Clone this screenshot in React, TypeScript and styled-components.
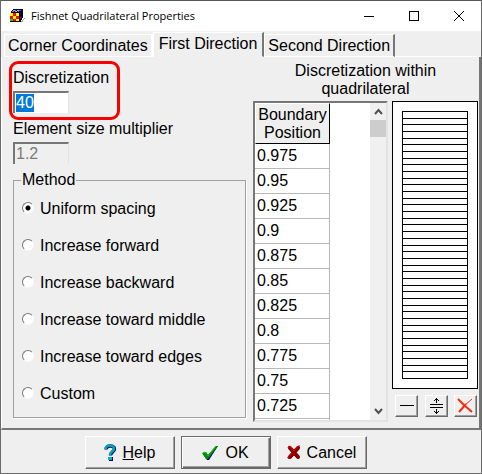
import React, { useState } from "react";
import styled, { createGlobalStyle, css } from "styled-components";

const GlobalStyle = createGlobalStyle`
  * { box-sizing: border-box; }
  body {
    margin: 0;
    background: #efefef;
    color: #000;
    font: 16px/18px "Liberation Sans", Arial, sans-serif;
  }
  button, input, select { font: inherit; color: inherit; }
`;

const Dialog = styled.main`
  display: flex;
  flex-direction: column;
  min-height: 100vh;
  border: 1px solid #6a6a6a;
  border-top-color: #5c585c;
  background: #efefef;
`;

const TitleBar = styled.header`
  display: flex;
  align-items: center;
  height: 30px;
  padding-left: 8px;
  background: #fff;
`;

const Title = styled.h1`
  flex: 1;
  margin: 0 0 0 5px;
  font: 11px/16px "Open Sans", "Noto Sans", sans-serif;
  white-space: nowrap;
`;

const WindowButton = styled.button`
  display: flex;
  align-items: center;
  justify-content: center;
  width: 45px;
  height: 30px;
  padding: 0;
  border: 0;
  background: transparent;
`;

const TabStrip = styled.div`
  display: flex;
  align-items: flex-end;
  height: 26px;
  padding: 1px 1px 0 3px;
`;

const TabFiller = styled.div`
  flex: 1;
  border-bottom: 1px solid #fff;
`;

const Tab = styled.button<{ $active: boolean }>`
  height: ${(p) => (p.$active ? 25 : 23)}px;
  padding: ${(p) => (p.$active ? "0 5px 2px" : "0 3px")};
  border: 1px solid #fff;
  border-right: 2px solid ${(p) => (p.$active ? "#777" : "#fff")};
  border-bottom-color: ${(p) => (p.$active ? "#efefef" : "#fff")};
  background: #efefef;
  line-height: 18px;
  white-space: nowrap;

  &:last-of-type { border-right-color: #777; }
`;

const Page = styled.section`
  display: flex;
  flex: 1;
  gap: 7px;
  padding: 4px 1px 5px 7px;
  border-left: 1px solid #fff;
  border-right: 2px solid #777;
  border-bottom: 2px solid #777;
`;

const Settings = styled.div`
  display: flex;
  flex: 1;
  flex-direction: column;
  align-items: flex-start;
  min-width: 0;
`;

const Callout = styled.div`
  width: 111px;
  height: 59px;
  padding: 5px 1px 0;
  border: 3px solid #f80000;
  border-radius: 9px;
`;

const Field = styled.div`
  display: flex;
  flex-direction: column;
  align-items: flex-start;
  gap: 4px;
`;

const PlainField = styled(Field)`
  padding-left: 4px;
`;

const sunken = css`
  border: 2px solid;
  border-color: #777 #e3e3e3 #e3e3e3 #777;
`;

const NumberBox = styled.input`
  ${sunken}
  width: 56px;
  height: 22px;
  padding: 0 1px;
  border-right-width: 1px;
  border-bottom-width: 0;
  background: #fff;
  outline: none;

  &::selection { background: #0078d7; color: #fff; }
  &:disabled { background: #efefef; color: #7a7a7a; }
`;

const MethodGroup = styled.fieldset`
  flex: 1;
  align-self: stretch;
  min-width: 0;
  margin: 7px 0 5px 4px;
  padding: 11px 8px 10px;
  border: 1px solid #a0a0a0;
  box-shadow: 1px 1px 0 #fff;

  legend { margin-left: -1px; padding: 0 1px; }
`;

const Options = styled.div`
  display: flex;
  flex-direction: column;
  gap: 19px;
`;

const Option = styled.label`
  display: flex;
  align-items: center;
  gap: 6px;
  white-space: nowrap;
`;

const Radio = styled.input`
  appearance: none;
  width: 12px;
  height: 12px;
  margin: 0 0 2px;
  border: 1px solid;
  border-color: #777 #f8f8f8 #f8f8f8 #777;
  border-radius: 50%;
  background: #fff;
  outline: none;

  &:checked { background: radial-gradient(circle, #000 0 2px, #fff 3px); }
`;

const Results = styled.div`
  display: flex;
  flex-direction: column;
  width: 225px;
`;

const Heading = styled.h2`
  margin: 0;
  padding: 1px 16px 3px;
  font: inherit;
  text-align: center;
`;

const ResultBody = styled.div`
  display: flex;
  flex: 1;
  gap: 4px;
`;

const ListBox = styled.div`
  ${sunken}
  display: flex;
  flex: 1;
  height: 321px;
  overflow: hidden;
  background: #fff;
`;

const ListView = styled.div`
  flex: 1;
  overflow: hidden;
`;

const PositionTable = styled.table`
  width: 75px;
  border-collapse: separate;
  border-spacing: 0;

  th {
    height: 41px;
    padding: 2px 0 1px;
    border: 1px solid #fff;
    border-right-color: #000;
    border-bottom-color: #000;
    background: #efefef;
    font-weight: normal;
  }
  td {
    height: 25px;
    padding: 0 2px 1px;
    border-right: 1px solid #b8b8b8;
    border-bottom: 1px solid #b8b8b8;
  }
`;

const ScrollTrack = styled.div`
  display: flex;
  flex-direction: column;
  width: 16px;
  background: #f0f0f0;
`;

const ScrollButton = styled.button`
  display: flex;
  align-items: center;
  justify-content: center;
  height: 17px;
  padding: 0;
  border: 0;
  background: transparent;
`;

const ScrollThumb = styled.div`
  height: 17px;
  margin-bottom: auto;
  background: #cdcdcd;
`;

const PreviewColumn = styled.div`
  display: flex;
  flex-direction: column;
  gap: 6px;
  width: 86px;
`;

const Preview = styled.div`
  padding: 9px;
  border: 1px solid #000;
  background: #fff;

  svg { display: block; }
`;

const ToolRow = styled.div`
  display: flex;
  justify-content: space-between;
  padding: 0 1px 0 3px;
`;

const raised = css`
  display: flex;
  align-items: center;
  justify-content: center;
  padding: 0;
  border: 1px solid;
  border-color: #fff #696969 #696969 #fff;
  background: #efefef;
  box-shadow: inset -1px -1px 0 #a0a0a0;
`;

const ToolButton = styled.button`
  ${raised}
  width: 23px;
  height: 22px;
`;

const Footer = styled.footer`
  display: flex;
  justify-content: center;
  gap: 6px;
  padding: 6px 31px 4px 0;
`;

const ActionButton = styled.button<{ $primary?: boolean }>`
  ${raised}
  gap: 6px;
  width: 90px;
  height: 33px;
  ${(p) =>
    p.$primary &&
    css`
      border-color: #696969;
      box-shadow: inset 1px 1px 0 #fff, inset -1px -1px 0 #696969, inset -2px -2px 0 #a0a0a0;
    `}
`;

const AppIcon = () => (
  <svg width="17" height="16" viewBox="0 0 17 16" shapeRendering="crispEdges" aria-hidden="true">
    <path d="M4 1h10v9h-1v2h-1v2H1V5h1V3h1V2h1z" fill="#000" />
    <path d="M1 5h3v3H1zM7 5h3v3H7zM4 8h3v3H4zM7 11h3v2H7z" fill="#ff0" />
    <path d="M4 5h3v3H4zM1 8h3v3H1zM7 8h3v3H7zM4 11h3v2H4z" fill="#f00" />
    <path d="M1 11h3v2H1z" fill="#0d0" />
    <path d="M4 2h2v1H4zM8 2h2v1H8zM6 3h2v1H6z" fill="#0ff" />
    <path d="M6 2h1v1H6zM10 2h2v1h-2zM3 3h2v1H3zM9 3h1v1H9z" fill="#f0f" />
    <path d="M11 5h1v2h-1zM12 8h1v2h-1z" fill="#00f" />
    <path d="M11 9h1v2h-1z" fill="#c00" />
    <path d="M15 10h1v1h-1zM14 11h1v1h-1zM13 12h1v1h-1zM12 13h2v1h-2z" fill="#999" />
  </svg>
);

const HelpIcon = () => (
  <svg width="13" height="17" viewBox="0 0 13 17" aria-hidden="true">
    <path d="M2 5.500C2 1 10.500 1 10.500 5C10.500 8 6.500 8 6.500 11.500" fill="none" stroke="#000080" strokeWidth="3.400" />
    <path d="M1.500 5C2 0.500 10 0.500 10 4.500C10 7.500 6 7.500 6 11" fill="none" stroke="#00a8a8" strokeWidth="2.600" />
    <path d="M5 13h4v4H5z" fill="#000080" />
    <path d="M4 13h4v3H4z" fill="#00b4b4" />
  </svg>
);

const CheckIcon = () => (
  <svg width="17" height="16" viewBox="0 0 17 16" aria-hidden="true">
    <path d="M1 9l3-2 2 3 8-9h2L7 15H5z" fill="#000080" />
    <path d="M0 8l3-1 3 4 8-10h2L6 14H4z" fill="#008c00" />
    <path d="M1 8l2-1 3 4 8-10" fill="none" stroke="#00d000" />
  </svg>
);

const CrossIcon = () => (
  <svg width="14" height="15" viewBox="0 0 14 15" aria-hidden="true">
    <path d="M3 3l8 9M11 3l-8 9" fill="none" stroke="#600000" strokeWidth="4" strokeLinecap="round" />
    <path d="M2.500 2.500l8 9M11 2.500l-9 10" fill="none" stroke="#900000" strokeWidth="3" strokeLinecap="round" />
    <path d="M1 3l1-2 2 1 3 4 4-5h2M1 13l4-5" fill="none" stroke="#e00000" />
  </svg>
);

const Chevron = ({ down = false }: { down?: boolean }) => (
  <svg width="9" height="7" viewBox="0 0 9 7" aria-hidden="true">
    <path d={down ? "M1 1l3.500 4L8 1" : "M1 6l3.500-4L8 6"} fill="none" stroke="#505050" strokeWidth="2" />
  </svg>
);

const DIVISIONS = 40;

const SpacingPreview = () => (
  <svg width="66" height="268" viewBox="0 0 66 268" shapeRendering="crispEdges" role="img" aria-label="Spacing preview">
    <rect x="0.500" y="0.500" width="65" height="267" fill="#fff" stroke="#000" />
    {Array.from({ length: DIVISIONS - 1 }, (_, i) => {
      const y = Math.round(((i + 1) * 267) / DIVISIONS) + 0.5;
      return <line key={i} x1="0" x2="66" y1={y} y2={y} stroke="#000" />;
    })}
  </svg>
);

const TABS = ["Corner Coordinates", "First Direction", "Second Direction"];
const METHODS = [
  "Uniform spacing",
  "Increase forward",
  "Increase backward",
  "Increase toward middle",
  "Increase toward edges",
  "Custom",
];
const POSITIONS = ["0.975", "0.95", "0.925", "0.9", "0.875", "0.85", "0.825", "0.8", "0.775", "0.75", "0.725", ""];

export default function App() {
  const [tab, setTab] = useState(1);
  const [method, setMethod] = useState(METHODS[0]);

  return (
    <Dialog>
      <GlobalStyle />
      <TitleBar>
        <AppIcon />
        <Title>Fishnet Quadrilateral Properties</Title>
        <WindowButton aria-label="Minimize">
          <svg width="10" height="10" shapeRendering="crispEdges"><path d="M0 5.500h10" stroke="#000" /></svg>
        </WindowButton>
        <WindowButton aria-label="Maximize">
          <svg width="10" height="10" shapeRendering="crispEdges"><path d="M.5.5h9v9h-9z" fill="none" stroke="#000" /></svg>
        </WindowButton>
        <WindowButton aria-label="Close">
          <svg width="10" height="10"><path d="M0 0l10 10M10 0L0 10" stroke="#000" /></svg>
        </WindowButton>
      </TitleBar>

      <TabStrip role="tablist">
        {TABS.map((name, i) => (
          <Tab key={name} role="tab" aria-selected={i === tab} $active={i === tab} onClick={() => setTab(i)}>
            {name}
          </Tab>
        ))}
        <TabFiller />
      </TabStrip>

      <Page>
        <Settings>
          <Callout>
            <Field>
              <label htmlFor="discretization">Discretization</label>
              <NumberBox
                id="discretization"
                defaultValue="40"
                autoFocus
                onFocus={(e: React.FocusEvent<HTMLInputElement>) => e.currentTarget.select()}
              />
            </Field>
          </Callout>
          <PlainField>
            <label htmlFor="multiplier">Element size multiplier</label>
            <NumberBox id="multiplier" defaultValue="1.2" disabled />
          </PlainField>
          <MethodGroup>
            <legend>Method</legend>
            <Options>
              {METHODS.map((name) => (
                <Option key={name}>
                  <Radio type="radio" name="method" checked={method === name} onChange={() => setMethod(name)} />
                  {name}
                </Option>
              ))}
            </Options>
          </MethodGroup>
        </Settings>

        <Results>
          <Heading>Discretization within quadrilateral</Heading>
          <ResultBody>
            <ListBox>
              <ListView>
                <PositionTable>
                  <thead>
                    <tr><th>Boundary Position</th></tr>
                  </thead>
                  <tbody>
                    {POSITIONS.map((value, i) => (
                      <tr key={i}><td>{value}</td></tr>
                    ))}
                  </tbody>
                </PositionTable>
              </ListView>
              <ScrollTrack>
                <ScrollButton aria-label="Scroll up"><Chevron /></ScrollButton>
                <ScrollThumb />
                <ScrollButton aria-label="Scroll down"><Chevron down /></ScrollButton>
              </ScrollTrack>
            </ListBox>
            <PreviewColumn>
              <Preview><SpacingPreview /></Preview>
              <ToolRow>
                <ToolButton aria-label="Add line">
                  <svg width="14" height="14" shapeRendering="crispEdges"><path d="M0 6.500h14" stroke="#000" /></svg>
                </ToolButton>
                <ToolButton aria-label="Move line">
                  <svg width="15" height="17" shapeRendering="crispEdges">
                    <path d="M1 6.500h13M1 9.500h13M7.500 0v5M7.500 11v5M5 2.500h1M9 2.500h1M6 1.500h3M5 13.500h1M9 13.500h1M6 14.500h3" stroke="#000" />
                  </svg>
                </ToolButton>
                <ToolButton aria-label="Delete line">
                  <svg width="17" height="16">
                    <path d="M1 1l6 6 8 7" fill="none" stroke="#f03010" strokeWidth="2" />
                    <path d="M15 1L8 7" stroke="#f03010" />
                    <path d="M9 6l-7 8" stroke="#f03010" strokeWidth="2" />
                  </svg>
                </ToolButton>
              </ToolRow>
            </PreviewColumn>
          </ResultBody>
        </Results>
      </Page>

      <Footer>
        <ActionButton><HelpIcon /><span><u>H</u>elp</span></ActionButton>
        <ActionButton $primary><CheckIcon />OK</ActionButton>
        <ActionButton><CrossIcon />Cancel</ActionButton>
      </Footer>
    </Dialog>
  );
}
